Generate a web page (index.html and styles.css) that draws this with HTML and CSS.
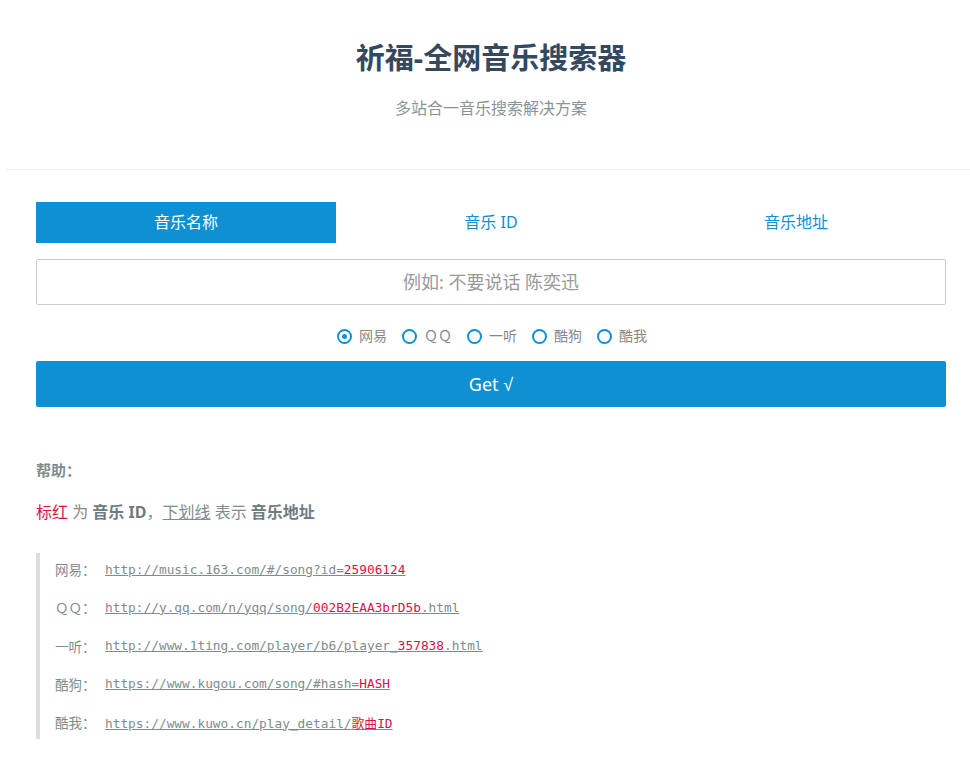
FILE: index.html
```html
<!DOCTYPE html>
<html lang="zh-CN">
<head>
    <meta charset="UTF-8">
    <meta name="viewport" content="width=device-width, initial-scale=1.0">
    <title>祈福-全网音乐搜索器</title>
    <link rel="stylesheet" href="styles.css">
</head>
<body>
    <header class="header">
        <h1>祈福-全网音乐搜索器</h1>
        <p class="subtitle">多站合一音乐搜索解决方案</p>
    </header>

    <div class="container">
        <ul class="tabs">
            <li class="active">音乐名称</li>
            <li>音乐 ID</li>
            <li>音乐地址</li>
        </ul>

        <input type="text" class="search-input" placeholder="例如: 不要说话 陈奕迅">

        <div class="radios">
            <label><input type="radio" name="site" checked> 网易</label>
            <label><input type="radio" name="site"> ＱＱ</label>
            <label><input type="radio" name="site"> 一听</label>
            <label><input type="radio" name="site"> 酷狗</label>
            <label><input type="radio" name="site"> 酷我</label>
        </div>

        <button class="btn-get">Get <span class="check">√</span></button>

        <h4 class="help-title">帮助：</h4>
        <p class="help-text"><span class="red">标红</span> 为 <b>音乐 ID</b>，<u>下划线</u> 表示 <b>音乐地址</b></p>

        <blockquote class="examples">
            <p><span class="site">网易：</span><u>http://music.163.com/#/song?id=<span class="red">25906124</span></u></p>
            <p><span class="site">ＱＱ：</span><u>http://y.qq.com/n/yqq/song/<span class="red">002B2EAA3brD5b</span>.html</u></p>
            <p><span class="site">一听：</span><u>http://www.1ting.com/player/b6/player_<span class="red">357838</span>.html</u></p>
            <p><span class="site">酷狗：</span><u>https://www.kugou.com/song/#hash=<span class="red">HASH</span></u></p>
            <p><span class="site">酷我：</span><u>https://www.kuwo.cn/play_detail/<span class="red">歌曲ID</span></u></p>
        </blockquote>
    </div>
</body>
</html>
```

FILE: styles.css
```css
body {
    margin: 0;
    padding: 0;
    font-family: "Noto Sans", "Noto Sans CJK SC", sans-serif;
    color: #7f8c8d;
    background-color: #ffffff;
}

.header {
    margin-left: 6px;
    padding: 40px 24px 49px 30px;
    border-bottom: 1px solid #eeeeee;
    text-align: center;
}

.header h1 {
    margin: 0;
    font-size: 29px;
    line-height: 36px;
    font-weight: bold;
    color: #34495e;
}

.subtitle {
    margin: 20px 0 0;
    font-size: 16px;
    line-height: 24px;
    color: #8a9495;
}

.container {
    width: 910px;
    margin: 32px 0 0 36px;
}

.tabs {
    display: flex;
    gap: 5px;
    margin: 0;
    padding: 0;
    list-style: none;
}

.tabs li {
    flex: 1;
    height: 41px;
    line-height: 41px;
    text-align: center;
    font-size: 16px;
    color: #0e90d2;
}

.tabs li.active {
    background-color: #0e90d2;
    color: #ffffff;
}

.search-input {
    display: block;
    width: 100%;
    height: 46px;
    margin-top: 16px;
    padding: 0 10px;
    box-sizing: border-box;
    border: 1px solid #cccccc;
    border-radius: 2px;
    font-family: inherit;
    font-size: 18px;
    text-align: center;
    outline: none;
}

.search-input::placeholder {
    color: #999999;
}

.radios {
    display: flex;
    justify-content: center;
    gap: 15px;
    margin-top: 21px;
    padding-left: 2px;
    height: 20px;
    line-height: 20px;
    font-size: 14px;
    color: #888888;
}

.radios label {
    display: flex;
    align-items: center;
    gap: 7px;
}

.radios input {
    appearance: none;
    width: 15px;
    height: 15px;
    margin: 0;
    border: 2px solid #0e90d2;
    border-radius: 50%;
    box-sizing: border-box;
    position: relative;
}

.radios input:checked::after {
    content: "";
    position: absolute;
    left: 3px;
    top: 3px;
    width: 5px;
    height: 5px;
    border-radius: 50%;
    background-color: #0e90d2;
}

.btn-get {
    display: block;
    width: 100%;
    height: 46px;
    margin-top: 15px;
    border: none;
    border-radius: 2px;
    background-color: #0e90d2;
    color: #ffffff;
    font-family: inherit;
    font-size: 18px;
    cursor: pointer;
}

.btn-get .check {
    font-family: "Liberation Sans", sans-serif;
}

.help-title {
    margin: 52px 0 0;
    font-size: 15px;
    line-height: 22px;
    font-weight: bold;
    color: #7f8c8d;
}

.help-text {
    margin: 19px 0 0;
    font-size: 16px;
    line-height: 24px;
    color: #7f8c8d;
}

.help-text b {
    color: #6f7b7c;
}

.red {
    color: #d41445;
}

.examples {
    margin: 29px 0 30px;
    padding: 4px 0 5px 15px;
    border-left: 4px solid #dddddd;
    font-size: 13.5px;
    color: #7f8c8d;
}

.examples p {
    display: flex;
    align-items: center;
    height: 24px;
    margin: 0 0 14.25px;
}

.examples p:last-child {
    margin-bottom: 0;
}

.examples .site {
    width: 50px;
}

.examples u {
    font-family: "DejaVu Sans Mono", "Noto Sans CJK SC", monospace;
    font-size: 12.8px;
}
```
